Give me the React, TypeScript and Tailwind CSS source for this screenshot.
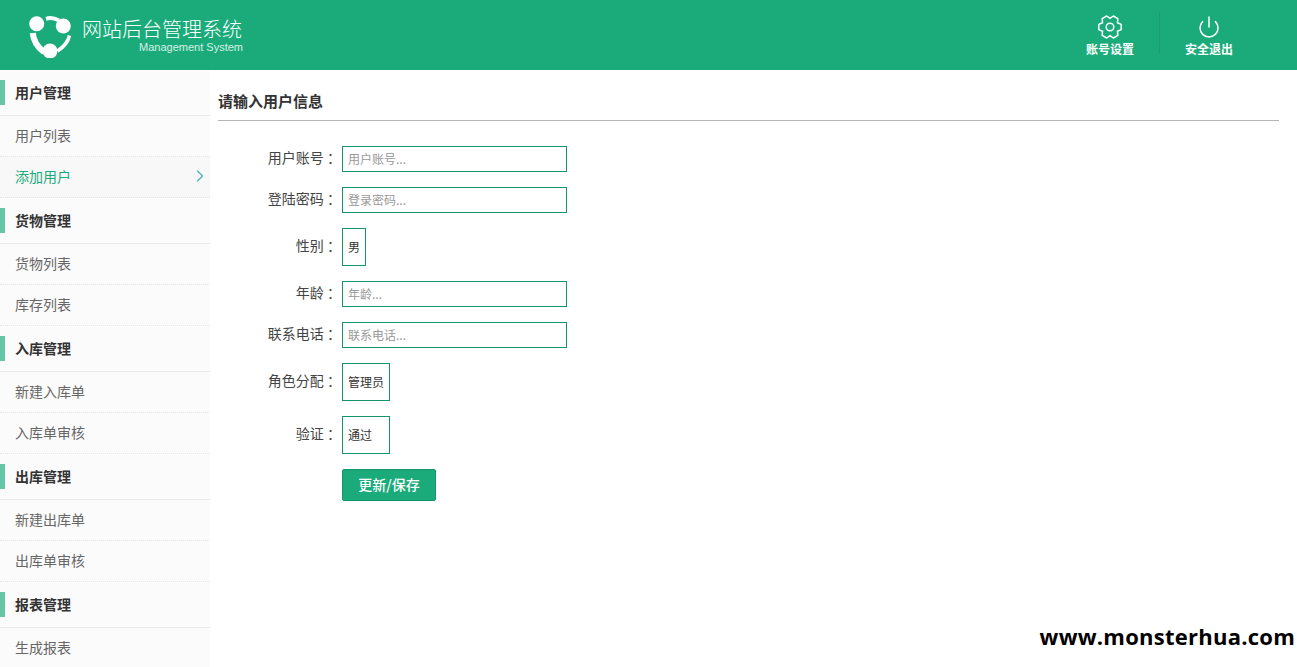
import { Power, ChevronRight } from "lucide-react"

const cjk = "font-['Noto_Sans_CJK_SC','Liberation_Sans',sans-serif]"

const menu = [
  { title: "用户管理", items: ["用户列表", "添加用户"] },
  { title: "货物管理", items: ["货物列表", "库存列表"] },
  { title: "入库管理", items: ["新建入库单", "入库单审核"] },
  { title: "出库管理", items: ["新建出库单", "出库单审核"] },
  { title: "报表管理", items: ["生成报表"] },
]

// six lobes, left and right ones pointing outwards
const gearPoints = [0, 60, 120, 180, 240, 300]
  .flatMap((deg) => [
    [deg - 13, 11.5],
    [deg + 13, 11.5],
    [deg + 30, 8.6],
  ])
  .map(([deg, r]) => {
    const rad = (deg * Math.PI) / 180
    return `${(12 + r * Math.cos(rad)).toFixed(2)},${(12 + r * Math.sin(rad)).toFixed(2)}`
  })
  .join(" ")

function Gear() {
  return (
    <svg width="24" height="24" viewBox="0 0 24 24" fill="none" stroke="currentColor" strokeWidth="1.5" strokeLinejoin="round" aria-hidden="true">
      <polygon points={gearPoints} />
      <circle cx="12" cy="12" r="3.800" />
    </svg>
  )
}

function Logo() {
  return (
    <svg width="46" height="44" viewBox="0 0 46 44" className="shrink-0" aria-hidden="true">
      <g fill="none" stroke="#fff">
        <path d="M3.800 19 Q4.500 30 15 38" strokeWidth="6" />
        <path d="M17 4.800 Q23 2.800 30 6.500" strokeWidth="4" />
        <path d="M40.500 21.500 Q38.500 30.500 28.500 37" strokeWidth="3.500" />
      </g>
      <circle cx="7.700" cy="9.700" r="7.500" fill="#fff" />
      <circle cx="34.300" cy="12" r="7.500" fill="#fff" />
      <circle cx="21" cy="37" r="7.500" fill="#fff" />
    </svg>
  )
}

function Field({ label, children }: { label: string; children: React.ReactNode }) {
  return (
    <div className="flex items-center">
      <label className="w-[124px] pr-[1px] pb-[4px] text-right text-sm text-[#444]">{label}</label>
      {children}
    </div>
  )
}

function TextInput({ placeholder }: { placeholder: string }) {
  return (
    <input
      placeholder={placeholder}
      className="h-[26px] w-[225px] border border-[#14966b] bg-white px-[5px] pb-[2px] text-xs text-[#333] outline-none placeholder:text-[#999]"
    />
  )
}

function SelectBox({ value, width }: { value: string; width: string }) {
  return (
    <select className={`h-[38px] ${width} appearance-none border border-[#14966b] bg-white px-[5px] text-xs text-[#333] outline-none`}>
      <option>{value}</option>
    </select>
  )
}

export default function App() {
  return (
    <div className={`relative flex h-screen flex-col overflow-hidden bg-white ${cjk}`}>
      <header className="flex h-[70px] shrink-0 items-center bg-[#1bab7b] text-white">
        <div className="ml-[29px] flex items-center">
          <div className="mt-[1px] mb-[-1px]">
            <Logo />
          </div>
          <div className="ml-[7px] w-[161px]">
            <div className="text-[20px] leading-[24px] font-light">网站后台管理系统</div>
            <div className="text-right font-['Liberation_Sans',sans-serif] text-[11px] leading-[12px] font-light text-[#d5f0e6]">
              Management System
            </div>
          </div>
        </div>
        <div className="ml-auto mr-[39px] flex items-center">
          <div className="flex w-[98px] flex-col items-center">
            <span className="mt-[2px]">
              <Gear />
            </span>
            <span className="mt-[2px] text-xs leading-[16px] font-bold">账号设置</span>
          </div>
          <div className="mb-[4px] h-[42px] w-px bg-[#189c70]" />
          <div className="flex w-[98px] flex-col items-center">
            <Power size={24} strokeWidth={1.5} className="mt-[2px]" />
            <span className="mt-[2px] text-xs leading-[16px] font-bold">安全退出</span>
          </div>
        </div>
      </header>

      <div className="flex min-h-0 flex-1">
        <aside className="w-[210px] shrink-0 bg-[#fbfbfb]">
          {menu.map((group) => (
            <div key={group.title}>
              <div className="flex h-[46px] items-center border-b border-[#e8e8e8]">
                <span className="h-[25px] w-[5px] bg-[#66c5a5]" />
                <span className="ml-[10px] pb-[2px] text-sm font-bold text-[#333]">{group.title}</span>
              </div>
              {group.items.map((item) => {
                const active = item === "添加用户"
                return (
                  <div
                    key={item}
                    className={`flex h-[41px] items-center justify-between border-b border-dotted border-[#e5e5e5] pl-[15px] pb-[2px] text-sm ${
                      active ? "bg-[#f8f8f8] text-[#1bab7b]" : "text-[#666]"
                    }`}
                  >
                    {item}
                    {active && <ChevronRight size={20} strokeWidth={1.5} className="text-[#4fb3b8]" />}
                  </div>
                )
              })}
            </div>
          ))}
        </aside>

        <main className="min-w-0 flex-1 pl-[8px] pr-[18px]">
          <h2 className="flex h-[51px] items-center border-b border-[#b5b5b5] pt-[12px] text-[15px] font-bold text-[#333]">
            请输入用户信息
          </h2>
          <form className="mt-[25px] flex flex-col gap-[15px]">
            <Field label="用户账号 ："><TextInput placeholder="用户账号..." /></Field>
            <Field label="登陆密码 ："><TextInput placeholder="登录密码..." /></Field>
            <Field label="性别 ："><SelectBox value="男" width="w-[24px]" /></Field>
            <Field label="年龄 ："><TextInput placeholder="年龄..." /></Field>
            <Field label="联系电话 ："><TextInput placeholder="联系电话..." /></Field>
            <Field label="角色分配 ："><SelectBox value="管理员" width="w-[48px]" /></Field>
            <Field label="验证 ："><SelectBox value="通过" width="w-[48px]" /></Field>
            <div className="pl-[124px]">
              <button type="button" className="h-[32px] w-[94px] rounded-[2px] border border-[#14966b] bg-[#1bab7b] pb-[2px] text-sm font-medium text-white">
                更新/保存
              </button>
            </div>
          </form>
        </main>
      </div>

      <div className="absolute right-[2px] bottom-[15px] font-['Open_Sans',sans-serif] text-[22px] leading-[32px] font-bold tracking-[0.25px] text-black">
        www.monsterhua.com
      </div>
    </div>
  )
}
